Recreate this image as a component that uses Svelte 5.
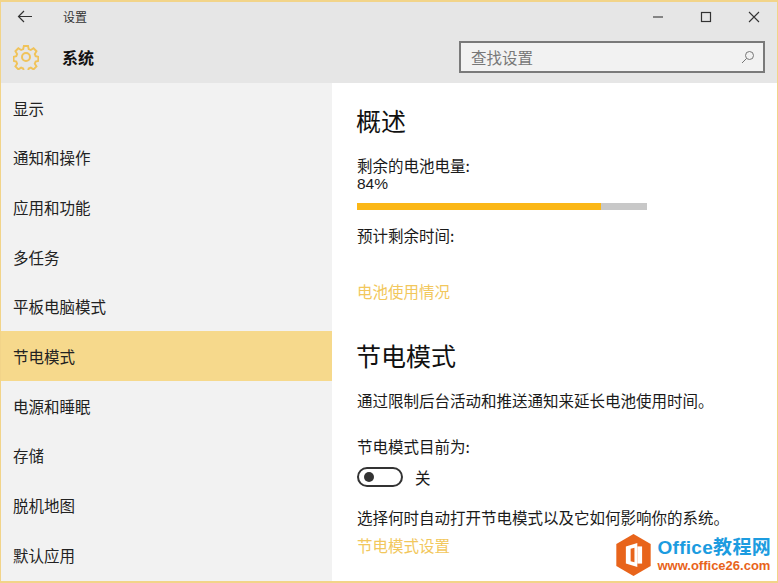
<script>
    const menu = ["显示", "通知和操作", "应用和功能", "多任务", "平板电脑模式", "节电模式", "电源和睡眠", "存储", "脱机地图", "默认应用"];
    const selected = "节电模式";
</script>

<div class="window">
    <header class="head">
        <div class="titlebar">
            <svg class="back" width="16" height="14" viewBox="0 0 16 14"><path d="M7 1 1.5 6.5 7 12M1.5 6.5H15" fill="none" stroke="#333" stroke-width="1.2"/></svg>
            <span class="apptitle">设置</span>
            <div class="winbtns">
                <svg width="12" height="12" viewBox="0 0 12 12"><path d="M1 6H11" stroke="#444" stroke-width="1.2"/></svg>
                <svg width="12" height="12" viewBox="0 0 12 12"><rect x="1.5" y="1.5" width="9" height="9" fill="none" stroke="#333" stroke-width="1.2"/></svg>
                <svg width="12" height="12" viewBox="0 0 12 12"><path d="M1 1 11 11M11 1 1 11" stroke="#333" stroke-width="1.1"/></svg>
            </div>
        </div>
        <div class="subbar">
            <svg class="gear" width="26" height="26" viewBox="0 0 26 26">
                <path d="M10.8 1.5h4.4l.7 3.3 2.2.9 2.9-1.800 3.100 3.100-1.800 2.900.9 2.200 2.800.7v4.400l-2.800.7-.9 2.200 1.800 2.900-3.100 3.100-2.900-1.800-2.200.9-.7 2.800h-4.400l-.7-2.800-2.200-.9-2.900 1.800-3.100-3.100 1.800-2.900-.9-2.200-2.800-.7v-4.400l2.800-.7.9-2.200-1.800-2.900 3.100-3.100 2.900 1.800 2.200-.9z" transform="translate(.6 .6) scale(.95)" fill="none" stroke="#f0c35a" stroke-width="2"/>
                <circle cx="13" cy="13" r="4" fill="none" stroke="#f0c35a" stroke-width="2"/>
            </svg>
            <h2 class="section">系统</h2>
            <div class="search">
                <span>查找设置</span>
                <svg width="14" height="14" viewBox="0 0 14 14"><circle cx="8.500" cy="5.500" r="4" fill="none" stroke="#777" stroke-width="1"/><path d="M5.500 8.500 1 13" stroke="#777" stroke-width="1"/></svg>
            </div>
        </div>
    </header>

    <div class="body">
        <nav class="side">
            {#each menu as item}
                <div class="item" class:active={item === selected}>{item}</div>
            {/each}
        </nav>

        <main class="content">
            <h1>概述</h1>
            <p class="label">剩余的电池电量:</p>
            <p class="pct">84%</p>
            <div class="bar"><div class="fill" style="width: 84%"></div></div>
            <p class="remain">预计剩余时间:</p>
            <p class="link usage">电池使用情况</p>

            <h1 class="second">节电模式</h1>
            <p class="desc">通过限制后台活动和推送通知来延长电池使用时间。</p>
            <p class="state">节电模式目前为:</p>
            <div class="toggle-row">
                <span class="toggle"><span class="knob"></span></span>
                <span>关</span>
            </div>
            <p class="when">选择何时自动打开节电模式以及它如何影响你的系统。</p>
            <p class="link">节电模式设置</p>
        </main>
    </div>

    <div class="watermark">
        <svg width="37" height="42" viewBox="0 0 38 44">
            <path d="M19 0 37 10.500V33.500L19 44 1 33.500V10.500z" fill="#e8641b"/>
            <path d="M11 13 23 9.500V34.500L11 31z" fill="#fff"/>
            <path d="M23 13H28V31H23z" fill="#fff"/>
            <path d="M16 15.500 20 14.500V29.500L16 28.500z" fill="#e8641b"/>
        </svg>
        <div class="wm-text">
            <div class="wm-top">Office教程网</div>
            <div class="wm-url">www.office26.com</div>
        </div>
    </div>
</div>

<style>
    :global(body) {
        margin: 0;
        background: #fff;
    }
    .window {
        position: relative;
        box-sizing: border-box;
        width: 778px;
        height: 583px;
        border: 1px solid #f2d489;
        border-top-width: 2px;
        border-bottom-width: 2px;
        overflow: hidden;
        font-family: "Noto Sans CJK SC", "Liberation Sans", sans-serif;
        color: #1a1a1a;
        background: #fff;
    }
    p, h1, h2 {
        margin: 0;
        font-weight: normal;
    }
    .head {
        height: 81px;
        background: #e6e6e6;
    }
    .titlebar {
        display: flex;
        align-items: center;
        height: 29px;
        padding-left: 16px;
    }
    .apptitle {
        margin-left: 30px;
        font-size: 12px;
        color: #333;
    }
    .winbtns {
        display: flex;
        gap: 36px;
        margin-left: auto;
        margin-right: 17px;
    }
    .subbar {
        display: flex;
        align-items: center;
        height: 52px;
    }
    .gear {
        margin-left: 12px;
    }
    .section {
        margin-left: 23px;
        font-size: 16px;
        font-weight: 700;
        color: #111;
    }
    .search {
        display: flex;
        align-items: center;
        justify-content: space-between;
        box-sizing: border-box;
        width: 306px;
        height: 32px;
        margin-left: auto;
        margin-right: 12px;
        margin-top: -1px;
        padding: 0 8px 0 10px;
        border: 2px solid #7a7a7a;
        background: #f2f2f2;
        font-size: 15.500px;
        color: #777;
    }
    .body {
        display: flex;
        height: 498px;
    }
    .side {
        display: flex;
        flex-direction: column;
        flex: none;
        width: 331px;
        background: #f2f2f2;
    }
    .item {
        display: flex;
        align-items: center;
        flex: none;
        height: 49.670px;
        padding-left: 12px;
        font-size: 15.500px;
        color: #222;
    }
    .item.active {
        background: #f6d98c;
    }
    .content {
        flex: 1;
        padding-left: 25px;
        font-size: 15.500px;
        line-height: 20px;
    }
    h1 {
        font-size: 25px;
        line-height: 34px;
        margin-top: 20px;
        margin-left: -1px;
        color: #111;
    }
    .label {
        margin-top: 18px;
    }
    .pct {
        font-family: "Liberation Sans", sans-serif;
        line-height: 18px;
    }
    .bar {
        width: 290px;
        height: 7px;
        margin-top: 10px;
        background: #c8c8c8;
    }
    .fill {
        height: 100%;
        background: #fbb716;
    }
    .remain {
        margin-top: 15px;
    }
    .link {
        color: #f2c75c;
    }
    .usage {
        margin-top: 36px;
    }
    .second {
        margin-top: 37px;
    }
    .desc {
        margin-top: 18px;
    }
    .state {
        margin-top: 26px;
    }
    .toggle-row {
        display: flex;
        align-items: center;
        gap: 12px;
        margin-top: 10px;
        height: 22px;
    }
    .toggle {
        display: flex;
        align-items: center;
        box-sizing: border-box;
        width: 46px;
        height: 20px;
        padding-left: 5px;
        border: 2px solid #333;
        border-radius: 10px;
    }
    .knob {
        width: 10px;
        height: 10px;
        border-radius: 50%;
        background: #333;
    }
    .when {
        margin-top: 19px;
    }
    .when + .link {
        margin-top: 8px;
    }
    /* sits over the page corner */
    .watermark {
        position: absolute;
        right: 6px;
        bottom: 5px;
        display: flex;
        align-items: center;
        gap: 5px;
    }
    .wm-text {
        font-family: "Liberation Sans", "Noto Sans CJK SC", sans-serif;
        font-weight: 700;
    }
    .wm-top {
        font-size: 19px;
        line-height: 21px;
        color: #1c9ce0;
        letter-spacing: 0.300px;
    }
    .wm-url {
        font-size: 13px;
        line-height: 15px;
        color: #e8641b;
    }
</style>
